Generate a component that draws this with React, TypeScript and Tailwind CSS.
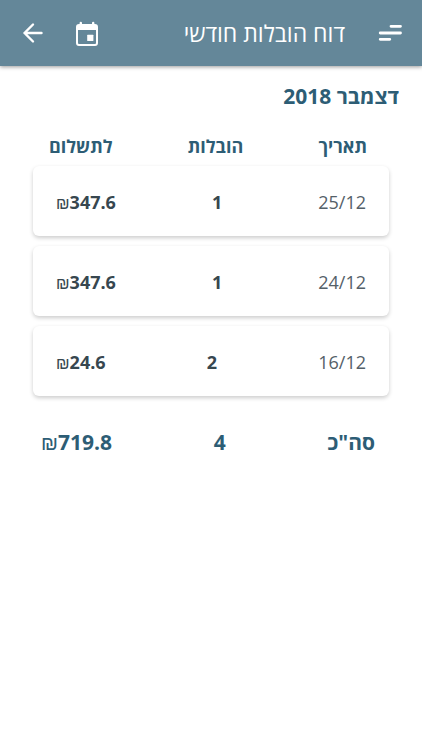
import React from 'react';

interface Delivery {
  date: string;
  count: number;
  amount: string;
}

const deliveries: Delivery[] = [
  { date: '25/12', count: 1, amount: '347.6' },
  { date: '24/12', count: 1, amount: '347.6' },
  { date: '16/12', count: 2, amount: '24.6' },
];

const MenuIcon: React.FC = () => (
  <svg width="28" height="28" viewBox="0 0 28 28" fill="none" stroke="currentColor" strokeWidth="2.8" strokeLinecap="round">
    <path d="M16 7.3H25.5M5.2 14H25.5M5.2 20.3H14.8" />
  </svg>
);

const CalendarIcon: React.FC = () => (
  <svg width="28" height="28" viewBox="0 0 28 28" fill="none">
    <path d="M7.8 4v4M20.2 4v4" stroke="currentColor" strokeWidth="2.4" strokeLinecap="round" />
    <rect x="4" y="6" width="20" height="20" rx="2" stroke="currentColor" strokeWidth="2" />
    <path d="M4 6h20v5H4z" fill="currentColor" />
    <rect x="14.2" y="15.8" width="6.2" height="6.2" rx="0.5" fill="currentColor" />
  </svg>
);

const BackIcon: React.FC = () => (
  <svg width="28" height="28" viewBox="0 0 28 28" fill="none" stroke="currentColor" strokeWidth="2.4" strokeLinecap="round" strokeLinejoin="round">
    <path d="M22.5 14H5.5M14 5.5L5.5 14l8.5 8.5" />
  </svg>
);

interface MoneyProps {
  value: string;
  signClassName: string;
}

// The shekel sign stays to the left of the number
const Money: React.FC<MoneyProps> = ({ value, signClassName }) => (
  <span dir="ltr">
    <span className={signClassName}>₪</span>
    {value}
  </span>
);

const App: React.FC = () => {
  return (
    <div dir="rtl" lang="he" className="min-h-screen bg-white font-['Open_Sans','Noto_Sans',sans-serif] text-[#37474f]">
      <header className="flex h-[66px] items-center bg-[#648799] px-[19px] text-white shadow-[0_1px_4px_rgba(0,0,0,0.4)]">
        <button type="button" aria-label="תפריט">
          <MenuIcon />
        </button>
        <h1 className="ms-[30px] text-[23px] font-medium">דוח הובלות חודשי</h1>
        <div className="ms-auto flex items-center gap-[26px]">
          <button type="button" aria-label="לוח שנה">
            <CalendarIcon />
          </button>
          <button type="button" aria-label="חזרה">
            <BackIcon />
          </button>
        </div>
      </header>

      <main>
        <h2 className="px-[23px] pt-[14px] text-[21px] leading-8 font-bold text-[#2d5d75]">דצמבר 2018</h2>

        <table className="mt-5 block px-[33px]">
          <thead className="block">
            <tr className="flex justify-between ps-[22px] pe-4 text-lg leading-7 text-[#2d5d75]">
              <th scope="col">תאריך</th>
              <th scope="col">הובלות</th>
              <th scope="col">לתשלום</th>
            </tr>
          </thead>
          <tbody className="mt-[6px] flex flex-col gap-[10px]">
            {deliveries.map((delivery) => (
              <tr
                key={delivery.date}
                className="flex h-[70px] items-center justify-between rounded-md bg-white px-[23px] pt-[2px] text-lg font-bold shadow-[0_2px_4px_rgba(0,0,0,0.2)]"
              >
                <td className="font-normal text-[#546068]">{delivery.date}</td>
                <td>{delivery.count}</td>
                <td>
                  <Money value={delivery.amount} signClassName="font-['Liberation_Sans'] text-base font-normal" />
                </td>
              </tr>
            ))}
          </tbody>
          <tfoot className="mt-[30px] block">
            <tr className="flex justify-between ps-[14px] pe-2 text-[21px] leading-8 font-bold text-[#2d5d75]">
              <th scope="row">סה"כ</th>
              <td>4</td>
              <td>
                <Money value="719.8" signClassName="font-['Liberation_Sans'] text-xl font-normal" />
              </td>
            </tr>
          </tfoot>
        </table>
      </main>
    </div>
  );
};

export default App;
